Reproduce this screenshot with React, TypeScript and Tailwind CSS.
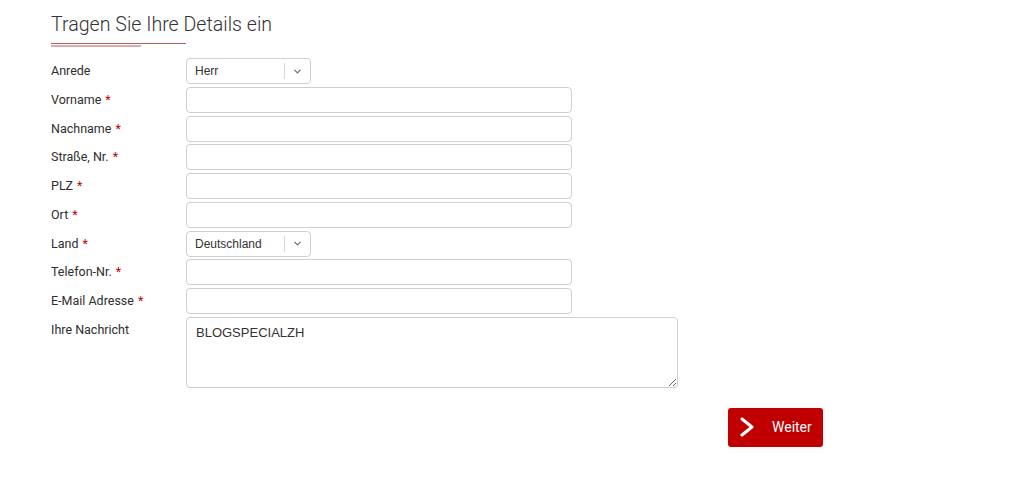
import { ChevronDown } from "lucide-react"

const fields = [
  { label: "Vorname", req: true },
  { label: "Nachname", req: true },
  { label: "Straße, Nr.", req: true },
  { label: "PLZ", req: true },
  { label: "Ort", req: true },
]

function Label({ text, req }: { text: string; req?: boolean }) {
  return (
    <div className="w-[135px] shrink-0 text-[12.5px] leading-[26px] text-[#2e2e2e]">
      {text}
      {req && <span className="ml-1 text-[#c00000]">*</span>}
    </div>
  )
}

function Select({ value }: { value: string }) {
  return (
    <div className="flex h-[26px] w-[125px] items-center rounded-[4px] border border-[#cfcfcf] bg-white">
      <span className="flex-1 pl-[8px] text-[12px] text-[#333] font-['Liberation_Sans',sans-serif]">{value}</span>
      <span className="h-[16px] w-px bg-[#d6d6d6]" />
      <span className="flex w-[25px] justify-center text-[#666]">
        <ChevronDown size={11} strokeWidth={2.5} />
      </span>
    </div>
  )
}

function Input() {
  return <div className="h-[26px] w-[386px] rounded-[4px] border border-[#cfcfcf] bg-white" />
}

export default function App() {
  return (
    <div className="min-h-[477px] bg-white pl-[51px] pt-[11px] font-['Roboto',sans-serif]">
      {/* Überschrift */}
      <h2 className="text-[19.6px] font-light leading-[28px] text-[#333]">Tragen Sie Ihre Details ein</h2>
      <div className="mt-[4px] h-px w-[135px] bg-[#b45c5c]" />
      <div className="mt-[1px] h-[2px] w-[90px] bg-[#dcaaaa]" />

      {/* Formular */}
      <div className="mt-[11px] flex flex-col gap-[2.75px]">
        <div className="flex items-start">
          <Label text="Anrede" />
          <Select value="Herr" />
        </div>
        {fields.map((f) => (
          <div key={f.label} className="flex items-start">
            <Label text={f.label} req={f.req} />
            <Input />
          </div>
        ))}
        <div className="flex items-start">
          <Label text="Land" req />
          <Select value="Deutschland" />
        </div>
        <div className="flex items-start">
          <Label text="Telefon-Nr." req />
          <Input />
        </div>
        <div className="flex items-start">
          <Label text="E-Mail Adresse" req />
          <Input />
        </div>
        <div className="flex items-start">
          <Label text="Ihre Nachricht" />
          <textarea
            defaultValue="BLOGSPECIALZH"
            className="h-[71px] w-[492px] resize rounded-[4px] border border-[#cfcfcf] bg-white px-[9px] py-[5px] text-[13px] text-[#333] outline-none font-['Liberation_Sans',sans-serif]"
          />
        </div>
      </div>

      {/* Weiter */}
      <div className="mt-[20px] flex w-[772px] justify-end">
        <button className="flex h-[39px] w-[95px] items-center rounded-[3px] bg-[#c00000] pl-[11px] text-[14px] text-white shadow-[0_0_8px_rgba(0,0,0,0.06)]">
          <svg width="16" height="20" viewBox="0 0 16 20" fill="none" stroke="white" strokeWidth="3" strokeLinecap="round" strokeLinejoin="round">
            <polyline points="3,2 13,10 3,18" />
          </svg>
          <span className="ml-[17px]">Weiter</span>
        </button>
      </div>
    </div>
  )
}
